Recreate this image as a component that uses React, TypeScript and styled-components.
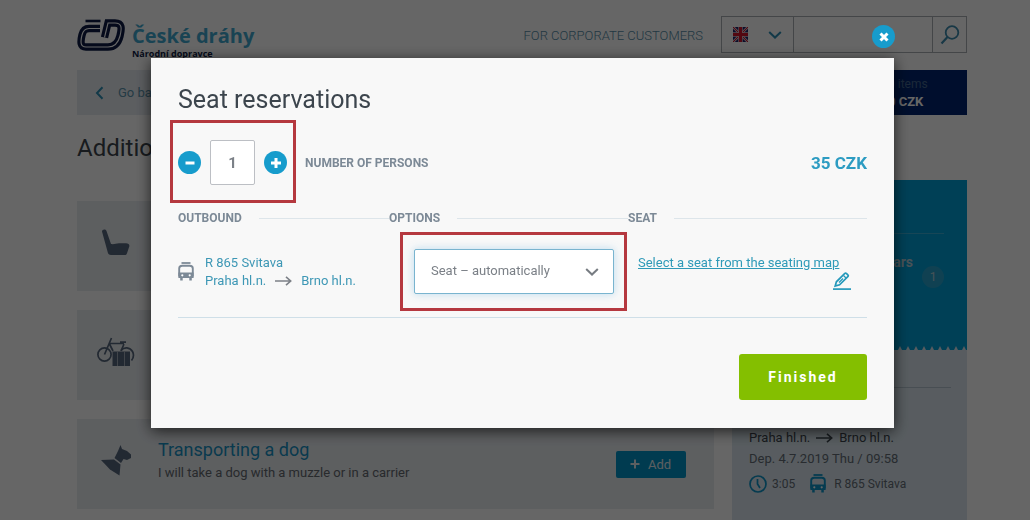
import React, { useState } from "react";
import styled, { createGlobalStyle } from "styled-components";

const GlobalStyle = createGlobalStyle`
  *, *::before, *::after { box-sizing: border-box; }
  body {
    margin: 0;
    background: #fff;
    color: #3c454d;
    font-family: Roboto, "Liberation Sans", sans-serif;
    font-size: 13px;
    line-height: 18px;
  }
  h1, h2, h3, p { margin: 0; font-weight: 400; }
  button, input, select { font-family: inherit; margin: 0; }
  svg { display: block; flex: none; }
`;

const Page = styled.div`
  display: flex;
  flex-direction: column;
  min-height: 100vh;
  padding: 0 63px 0 77px;
`;

/* ---------- header ---------- */

const Header = styled.header`
  display: flex;
  align-items: flex-start;
  height: 70px;
  padding-top: 16px;
`;

const Brand = styled.a`
  display: flex;
  gap: 6px;
  padding-top: 3px;
  text-decoration: none;
`;

const BrandText = styled.span`
  display: flex;
  flex-direction: column;
  padding-top: 4px;
  font-family: "Open Sans", "Noto Sans", sans-serif;
  font-weight: 700;
`;

const BrandName = styled.span`
  font-size: 20px;
  line-height: 26px;
  color: #3fa9cf;
`;

const BrandTag = styled.span`
  font-size: 9px;
  line-height: 10px;
  color: #0d1b45;
`;

const CorporateLink = styled.a`
  margin-left: auto;
  margin-right: 18px;
  line-height: 40px;
  font-weight: 300;
  color: #558ba6;
  text-decoration: none;
`;

const SearchBar = styled.form`
  display: flex;
  width: 246px;
  height: 37px;
  border: 1px solid #aab0b5;
`;

const LangButton = styled.button`
  display: flex;
  align-items: center;
  gap: 20px;
  width: 72px;
  padding: 0 0 0 11px;
  border: 0;
  border-right: 1px solid #aab0b5;
  background: none;
`;

const SearchInput = styled.input`
  flex: 1;
  min-width: 0;
  padding: 0 8px;
  border: 0;
  background: none;
`;

const SearchButton = styled.button`
  width: 34px;
  padding: 0 0 0 7px;
  border: 0;
  border-left: 1px solid #aab0b5;
  background: none;
`;

/* ---------- navigation strip ---------- */

const Strip = styled.nav`
  display: flex;
  justify-content: space-between;
  height: 45px;
  background: #e6ebf1;
`;

const BackLink = styled.a`
  display: flex;
  align-items: center;
  gap: 14px;
  padding-left: 18px;
  color: #5c93ac;
  text-decoration: none;
`;

const Cart = styled.a`
  width: 120px;
  padding: 5px 0 0 41px;
  background: #002570;
  color: #44658f;
  font-size: 12px;
  text-decoration: none;
`;

const CartTotal = styled.strong`
  display: block;
  color: #fff;
  font-size: 13px;
`;

/* ---------- page columns ---------- */

const Columns = styled.div`
  display: grid;
  grid-template-columns: 1fr 235px;
  column-gap: 18px;
  flex: 1;
`;

const PageTitle = styled.h1`
  height: 86px;
  padding-top: 18px;
  font-size: 24px;
  line-height: 30px;
`;

const CardList = styled.div`
  display: flex;
  flex-direction: column;
  gap: 19px;
  padding-bottom: 11px;
`;

const Card = styled.article`
  display: flex;
  align-items: center;
  height: 90px;
  padding-right: 28px;
  background: #e9edf1;
  color: #56677d;
`;

const CardIcon = styled.div`
  display: flex;
  justify-content: center;
  width: 81px;
  padding: 0 3px 8px 0;
`;

const CardBody = styled.div`
  flex: 1;
  padding-bottom: 10px;
  color: #64696f;
`;

const CardTitle = styled.h2`
  font-size: 18px;
  line-height: 28px;
  color: #1891c4;
`;

const AddButton = styled.button`
  display: flex;
  align-items: center;
  gap: 7px;
  width: 70px;
  height: 27px;
  padding: 0 13px;
  border: 0;
  border-radius: 2px;
  background: #0093c7;
  color: #e6eef2;
  font-size: 13px;
`;

const Sidebar = styled.aside`
  margin-top: 65px;
  background: #dbe7ef;
`;

const Passengers = styled.section`
  height: 166px;
  padding: 53px 23px 0 17px;
  background: #00a0d8;
`;

const PassengerRow = styled.div`
  display: flex;
  justify-content: flex-end;
  gap: 9px;
  padding-top: 19px;
  border-top: 1px solid #3aaed6;
  color: #b4cdd8;
  font-size: 14px;
  font-weight: 700;
`;

const Badge = styled.span`
  width: 22px;
  height: 22px;
  margin-top: 13px;
  border-radius: 50%;
  background: #2aa3cc;
  font-size: 12px;
  font-weight: 400;
  line-height: 22px;
  text-align: center;
`;

const Trip = styled.section`
  margin: 36px 16px 0 17px;
  padding-top: 41px;
  border-top: 1px solid #b4c4cf;
  color: #646d77;
`;

const Route = styled.p`
  display: flex;
  align-items: center;
  gap: 6px;
`;

const TripRoute = styled(Route)`
  color: #3c454d;
`;

const Departure = styled.p`
  padding: 3px 0 6px;
`;

const TripMeta = styled.p`
  display: flex;
  align-items: center;
  gap: 5px;
  font-size: 12px;
  & > svg { color: #0e93c7; }
  & > svg + span + svg { margin: 0 3px 0 10px; }
`;

/* ---------- dialog ---------- */

const Overlay = styled.div`
  position: fixed;
  inset: 0;
  padding: 58px 136px 0 151px;
  background: rgba(0, 0, 0, 0.6);
`;

const Dialog = styled.section`
  position: relative;
  padding: 27px 27px 28px;
  background: #f8f8f8;
  box-shadow: 0 3px 14px rgba(0, 0, 0, 0.7);
`;

const CloseButton = styled.button`
  position: absolute;
  top: -33px;
  right: -1px;
  display: grid;
  place-items: center;
  width: 23px;
  height: 23px;
  padding: 0;
  border: 0;
  border-radius: 50%;
  background: #179ccc;
  color: #fff;
`;

const DialogTitle = styled.h2`
  font-size: 25px;
  line-height: 30px;
`;

const CountRow = styled.div`
  display: flex;
  align-items: center;
  gap: 18px;
  padding: 25px 0 24px;
`;

const Marked = styled.div<{ $inset: string }>`
  position: relative;
  display: flex;
  align-items: center;
  &::after {
    content: "";
    position: absolute;
    inset: ${(p) => p.$inset};
    border: 3px solid #b5383f;
    pointer-events: none;
  }
`;

const Stepper = styled(Marked)`
  gap: 9px;
`;

const RoundButton = styled.button`
  display: grid;
  place-items: center;
  width: 23px;
  height: 23px;
  padding: 0;
  border: 0;
  border-radius: 50%;
  background: #179ccc;
  color: #fff;
`;

const CountInput = styled.input`
  width: 45px;
  height: 45px;
  border: 1px solid #bcbfc4;
  border-radius: 2px;
  background: #fff;
  color: #7b8087;
  font-size: 15px;
  font-weight: 700;
  text-align: center;
`;

const Label = styled.label`
  color: #7c8996;
  font-size: 12px;
  font-weight: 700;
`;

const Price = styled.strong`
  margin-left: auto;
  color: #2d9cc2;
  font-size: 17px;
`;

const Trains = styled.table`
  width: 100%;
  table-layout: fixed;
  border-collapse: collapse;
  border-bottom: 1px solid #cfdfe8;
`;

const HeadCell = styled.th<{ $width?: string }>`
  width: ${(p) => p.$width || "auto"};
  padding: 0;
`;

const HeadText = styled.span`
  display: flex;
  align-items: center;
  gap: 17px;
  color: #7c8996;
  font-size: 12px;
  &::after {
    content: "";
    flex: 1;
    border-top: 1px solid #dde5ea;
  }
`;

const Cell = styled.td<{ $indent?: string }>`
  padding: 22px 0 23px ${(p) => p.$indent || "0"};
`;

const TrainInfo = styled.div`
  display: flex;
  align-items: center;
  gap: 11px;
  color: #3d97b5;
  & > svg { color: #7c8996; }
`;

const RouteArrow = styled.span`
  color: #7c8087;
  padding: 0 3px;
`;

const SelectBox = styled(Marked)`
  width: 200px;
  & > svg {
    position: absolute;
    right: 15px;
    color: #777c82;
    pointer-events: none;
  }
`;

const SeatSelect = styled.select`
  appearance: none;
  width: 100%;
  height: 45px;
  padding: 0 40px 3px 16px;
  border: 1px solid #79b4cf;
  border-radius: 2px;
  background: #fff;
  box-shadow: 0 0 8px rgba(80, 170, 220, 0.35);
  color: #7b8087;
  font-size: 13px;
`;

const SeatLinks = styled.div`
  display: flex;
  flex-direction: column;
  width: 213px;
  height: 36px;
`;

const SeatLink = styled.a`
  color: #2f9ab8;
`;

const EditLink = styled.a`
  align-self: flex-end;
  color: #2599bb;
`;

const Actions = styled.div`
  display: flex;
  justify-content: flex-end;
  padding-top: 36px;
`;

const FinishButton = styled.button`
  width: 128px;
  height: 46px;
  border: 0;
  border-radius: 3px;
  background: #84bf00;
  color: #fff;
  font-size: 14px;
  font-weight: 700;
  letter-spacing: 2px;
`;

/* ---------- drawings ---------- */

const Logo = () => (
  <svg width="49" height="32" viewBox="0 0 49 32" fill="none">
    <path d="M23 9.500H12C7.500 9.500 6 12 5 16C3.300 23 3.300 28 9 28H31C38 28 41.500 23 43 17C45 9 45 4 38 4H31L27.500 18.500" stroke="#0d1b45" strokeWidth="7.400" />
    <path d="M23 9.500H12C7.500 9.500 6 12 5 16C3.300 23 3.300 28 9 28H31C38 28 41.500 23 43 17C45 9 45 4 38 4H31L27.500 18.500" stroke="#fff" strokeWidth="1.100" />
    <path d="M8.500 2H23.500" stroke="#0d1b45" strokeWidth="2.600" />
  </svg>
);

const Flag = () => (
  <svg width="15" height="15" viewBox="0 0 15 15">
    <rect width="15" height="15" fill="#1d2569" />
    <path d="M0 0L15 15M15 0L0 15" stroke="#d8b8c4" strokeWidth="2.600" />
    <path d="M0 0L15 15M15 0L0 15" stroke="#cf142b" strokeWidth="1" />
    <path d="M7.500 0V15M0 7.500H15" stroke="#e0c4cc" strokeWidth="4.400" />
    <path d="M7.500 0V15M0 7.500H15" stroke="#cf142b" strokeWidth="3" />
  </svg>
);

const Chevron = ({ color = "currentColor" }: { color?: string }) => (
  <svg width="14" height="8" viewBox="0 0 14 8" fill="none">
    <path d="M1.200 1L7 6.500L12.800 1" stroke={color} strokeWidth="2" />
  </svg>
);

const BackArrow = () => (
  <svg width="9" height="14" viewBox="0 0 9 14" fill="none">
    <path d="M7.500 1.200L2 7L7.500 12.800" stroke="#2d8fb5" strokeWidth="2" />
  </svg>
);

const Magnifier = () => (
  <svg width="20" height="20" viewBox="0 0 20 20" fill="none" stroke="#3d8cae" strokeWidth="1.800">
    <circle cx="12" cy="7.500" r="6.300" />
    <path d="M7.500 12L1.500 18.500" strokeWidth="2.200" />
  </svg>
);

const SeatIcon = () => (
  <svg width="28" height="27" viewBox="0 0 28 27" fill="currentColor">
    <path d="M0 2.500C0 .3 3.500-.3 4.500 2L9 15C12 15.500 14 14.500 17 14.200H24C27 14.200 28 16 27 18.200L25 24.200C24.600 25.500 24 26 22.500 26H9C7 26 6.200 25 5.800 23.500Z" />
  </svg>
);

const BikeIcon = () => (
  <svg width="38" height="29" viewBox="0 0 38 29" fill="none" stroke="currentColor" strokeWidth="1.700">
    <circle cx="7.500" cy="17.500" r="6.600" />
    <path d="M24 13.500C27 9.500 33 10 35.500 14.500C37 17.500 36.500 21 34.500 23.500" />
    <path d="M7.500 17.500L14.500 1M12 6.500H27M12.500 7L16 14M27 7L24 14M23 5.200H29" />
    <path d="M15.500 14.500H33V29H15.500Z" fill="currentColor" stroke="none" />
    <path d="M20.500 14V29M27.500 14V29" stroke="#a3acb8" strokeWidth="1" />
  </svg>
);

const DogIcon = () => (
  <svg width="31" height="31" viewBox="0 0 31 31" fill="currentColor">
    <path d="M0 15L13 14.500L19.500 19.500L18.500 30.500L9 24.500Z" />
    <path d="M19.500 0L21 4L26 6L30 9.500L30 13L26 15L22.500 14L20 18L13.500 13L17 6Z" />
  </svg>
);

const TrainIcon = () => (
  <svg width="16" height="19" viewBox="0 0 16 19" fill="none">
    <path d="M3.500 1H12.500" stroke="currentColor" strokeWidth="1.800" />
    <path d="M1.200 14.500V6.500C1.200 4.600 2.400 3.700 4.200 3.700H11.800C13.600 3.700 14.800 4.600 14.800 6.500V14.500" stroke="currentColor" strokeWidth="1.900" />
    <path d="M.4 10.500H15.600V16H13.800V18.500H11.300V16H4.700V18.500H2.200V16H.4Z" fill="currentColor" />
    <circle cx="4.300" cy="13.300" r="1.100" fill="#fff" />
    <circle cx="11.700" cy="13.300" r="1.100" fill="#fff" />
  </svg>
);

const ClockIcon = () => (
  <svg width="18" height="18" viewBox="0 0 18 18" fill="none" stroke="currentColor" strokeWidth="1.700">
    <circle cx="9" cy="9" r="8" />
    <path d="M8.500 4V9L11 13" />
  </svg>
);

const LongArrow = () => (
  <svg width="17" height="10" viewBox="0 0 17 10" fill="none" stroke="currentColor" strokeWidth="1.600">
    <path d="M0 5H15.500M11 .8L15.700 5L11 9.200" />
  </svg>
);

const Pencil = () => (
  <svg width="18" height="18" viewBox="0 0 18 18" fill="none" stroke="currentColor" strokeWidth="1.700">
    <path d="M0 17.100H18" />
    <path d="M2.200 14L3.400 9.800L11.600 1.700C12.200 1.100 13 1.100 13.600 1.600L14.800 2.800C15.400 3.400 15.400 4.100 14.800 4.700L6.600 12.800Z" />
    <path d="M10.500 3.500L13 6M6 10.500L10 6.500" strokeWidth="1.300" />
  </svg>
);

const Glyph = ({ d, width = 3 }: { d: string; width?: number }) => (
  <svg width="12" height="12" viewBox="0 0 12 12" fill="none" stroke="currentColor" strokeWidth={width}>
    <path d={d} />
  </svg>
);

export default function App() {
  const [count, setCount] = useState(1);

  return (
    <>
      <GlobalStyle />
      <Page>
        <Header>
          <Brand href="#">
            <Logo />
            <BrandText>
              <BrandName>České dráhy</BrandName>
              <BrandTag>Národní dopravce</BrandTag>
            </BrandText>
          </Brand>
          <CorporateLink href="#">FOR CORPORATE CUSTOMERS</CorporateLink>
          <SearchBar>
            <LangButton type="button" aria-label="Language" aria-haspopup="listbox">
              <Flag />
              <Chevron color="#2d8fb5" />
            </LangButton>
            <SearchInput type="search" aria-label="Search" />
            <SearchButton aria-label="Search">
              <Magnifier />
            </SearchButton>
          </SearchBar>
        </Header>

        <Strip>
          <BackLink href="#">
            <BackArrow />
            Go back
          </BackLink>
          <Cart href="#">
            0 items
            <CartTotal>0 CZK</CartTotal>
          </Cart>
        </Strip>

        <Columns>
          <main>
            <PageTitle>Additional services</PageTitle>
            <CardList>
              <Card>
                <CardIcon><SeatIcon /></CardIcon>
              </Card>
              <Card>
                <CardIcon><BikeIcon /></CardIcon>
              </Card>
              <Card>
                <CardIcon><DogIcon /></CardIcon>
                <CardBody>
                  <CardTitle>Transporting a dog</CardTitle>
                  <p>I will take a dog with a muzzle or in a carrier</p>
                </CardBody>
                <AddButton>
                  <Glyph d="M1.500 6H10.500M6 1.500V10.500" width={2} />
                  Add
                </AddButton>
              </Card>
            </CardList>
          </main>

          <Sidebar>
            <Passengers>
              <PassengerRow>
                <span>years</span>
                <Badge>1</Badge>
              </PassengerRow>
            </Passengers>
            <svg width="100%" height="5">
              <defs>
                <pattern id="teeth" width="8" height="5" patternUnits="userSpaceOnUse">
                  <path d="M0 0H8L6 4H2Z" fill="#00a0d8" />
                </pattern>
              </defs>
              <rect width="100%" height="5" fill="url(#teeth)" />
            </svg>
            <Trip>
              <TripRoute>
                Praha hl.n. <LongArrow /> Brno hl.n.
              </TripRoute>
              <Departure>Dep. 4.7.2019 Thu / 09:58</Departure>
              <TripMeta>
                <ClockIcon />
                <span>3:05</span>
                <TrainIcon />
                <span>R 865 Svitava</span>
              </TripMeta>
            </Trip>
          </Sidebar>
        </Columns>
      </Page>

      <Overlay>
        <Dialog role="dialog" aria-modal="true" aria-labelledby="dialog-title">
          <CloseButton aria-label="Close">
            <Glyph d="M2.500 2.500L9.500 9.500M9.500 2.500L2.500 9.500" />
          </CloseButton>
          <DialogTitle id="dialog-title">Seat reservations</DialogTitle>

          <CountRow>
            <Stepper $inset="-20px -9px -18px -8px">
              <RoundButton aria-label="Fewer persons" onClick={() => setCount(Math.max(1, count - 1))}>
                <Glyph d="M1.500 6H10.500" />
              </RoundButton>
              <CountInput
                id="persons"
                value={count}
                onChange={(e) => setCount(Number(e.target.value) || 1)}
              />
              <RoundButton aria-label="More persons" onClick={() => setCount(count + 1)}>
                <Glyph d="M1 6H11M6 1V11" />
              </RoundButton>
            </Stepper>
            <Label htmlFor="persons">NUMBER OF PERSONS</Label>
            <Price>35 CZK</Price>
          </CountRow>

          <Trains>
            <thead>
              <tr>
                <HeadCell $width="211px"><HeadText>OUTBOUND</HeadText></HeadCell>
                <HeadCell><HeadText>OPTIONS</HeadText></HeadCell>
                <HeadCell><HeadText>SEAT</HeadText></HeadCell>
              </tr>
            </thead>
            <tbody>
              <tr>
                <Cell>
                  <TrainInfo>
                    <TrainIcon />
                    <div>
                      <p>R 865 Svitava</p>
                      <Route>
                        Praha hl.n. <RouteArrow><LongArrow /></RouteArrow> Brno hl.n.
                      </Route>
                    </div>
                  </TrainInfo>
                </Cell>
                <Cell $indent="25px">
                  <SelectBox $inset="-17px -13px -17px -14px">
                    <SeatSelect aria-label="Seat option">
                      <option>Seat – automatically</option>
                    </SeatSelect>
                    <Chevron />
                  </SelectBox>
                </Cell>
                <Cell $indent="10px">
                  <SeatLinks>
                    <SeatLink href="#">Select a seat from the seating map</SeatLink>
                    <EditLink href="#" aria-label="Edit seat"><Pencil /></EditLink>
                  </SeatLinks>
                </Cell>
              </tr>
            </tbody>
          </Trains>

          <Actions>
            <FinishButton>Finished</FinishButton>
          </Actions>
        </Dialog>
      </Overlay>
    </>
  );
}
